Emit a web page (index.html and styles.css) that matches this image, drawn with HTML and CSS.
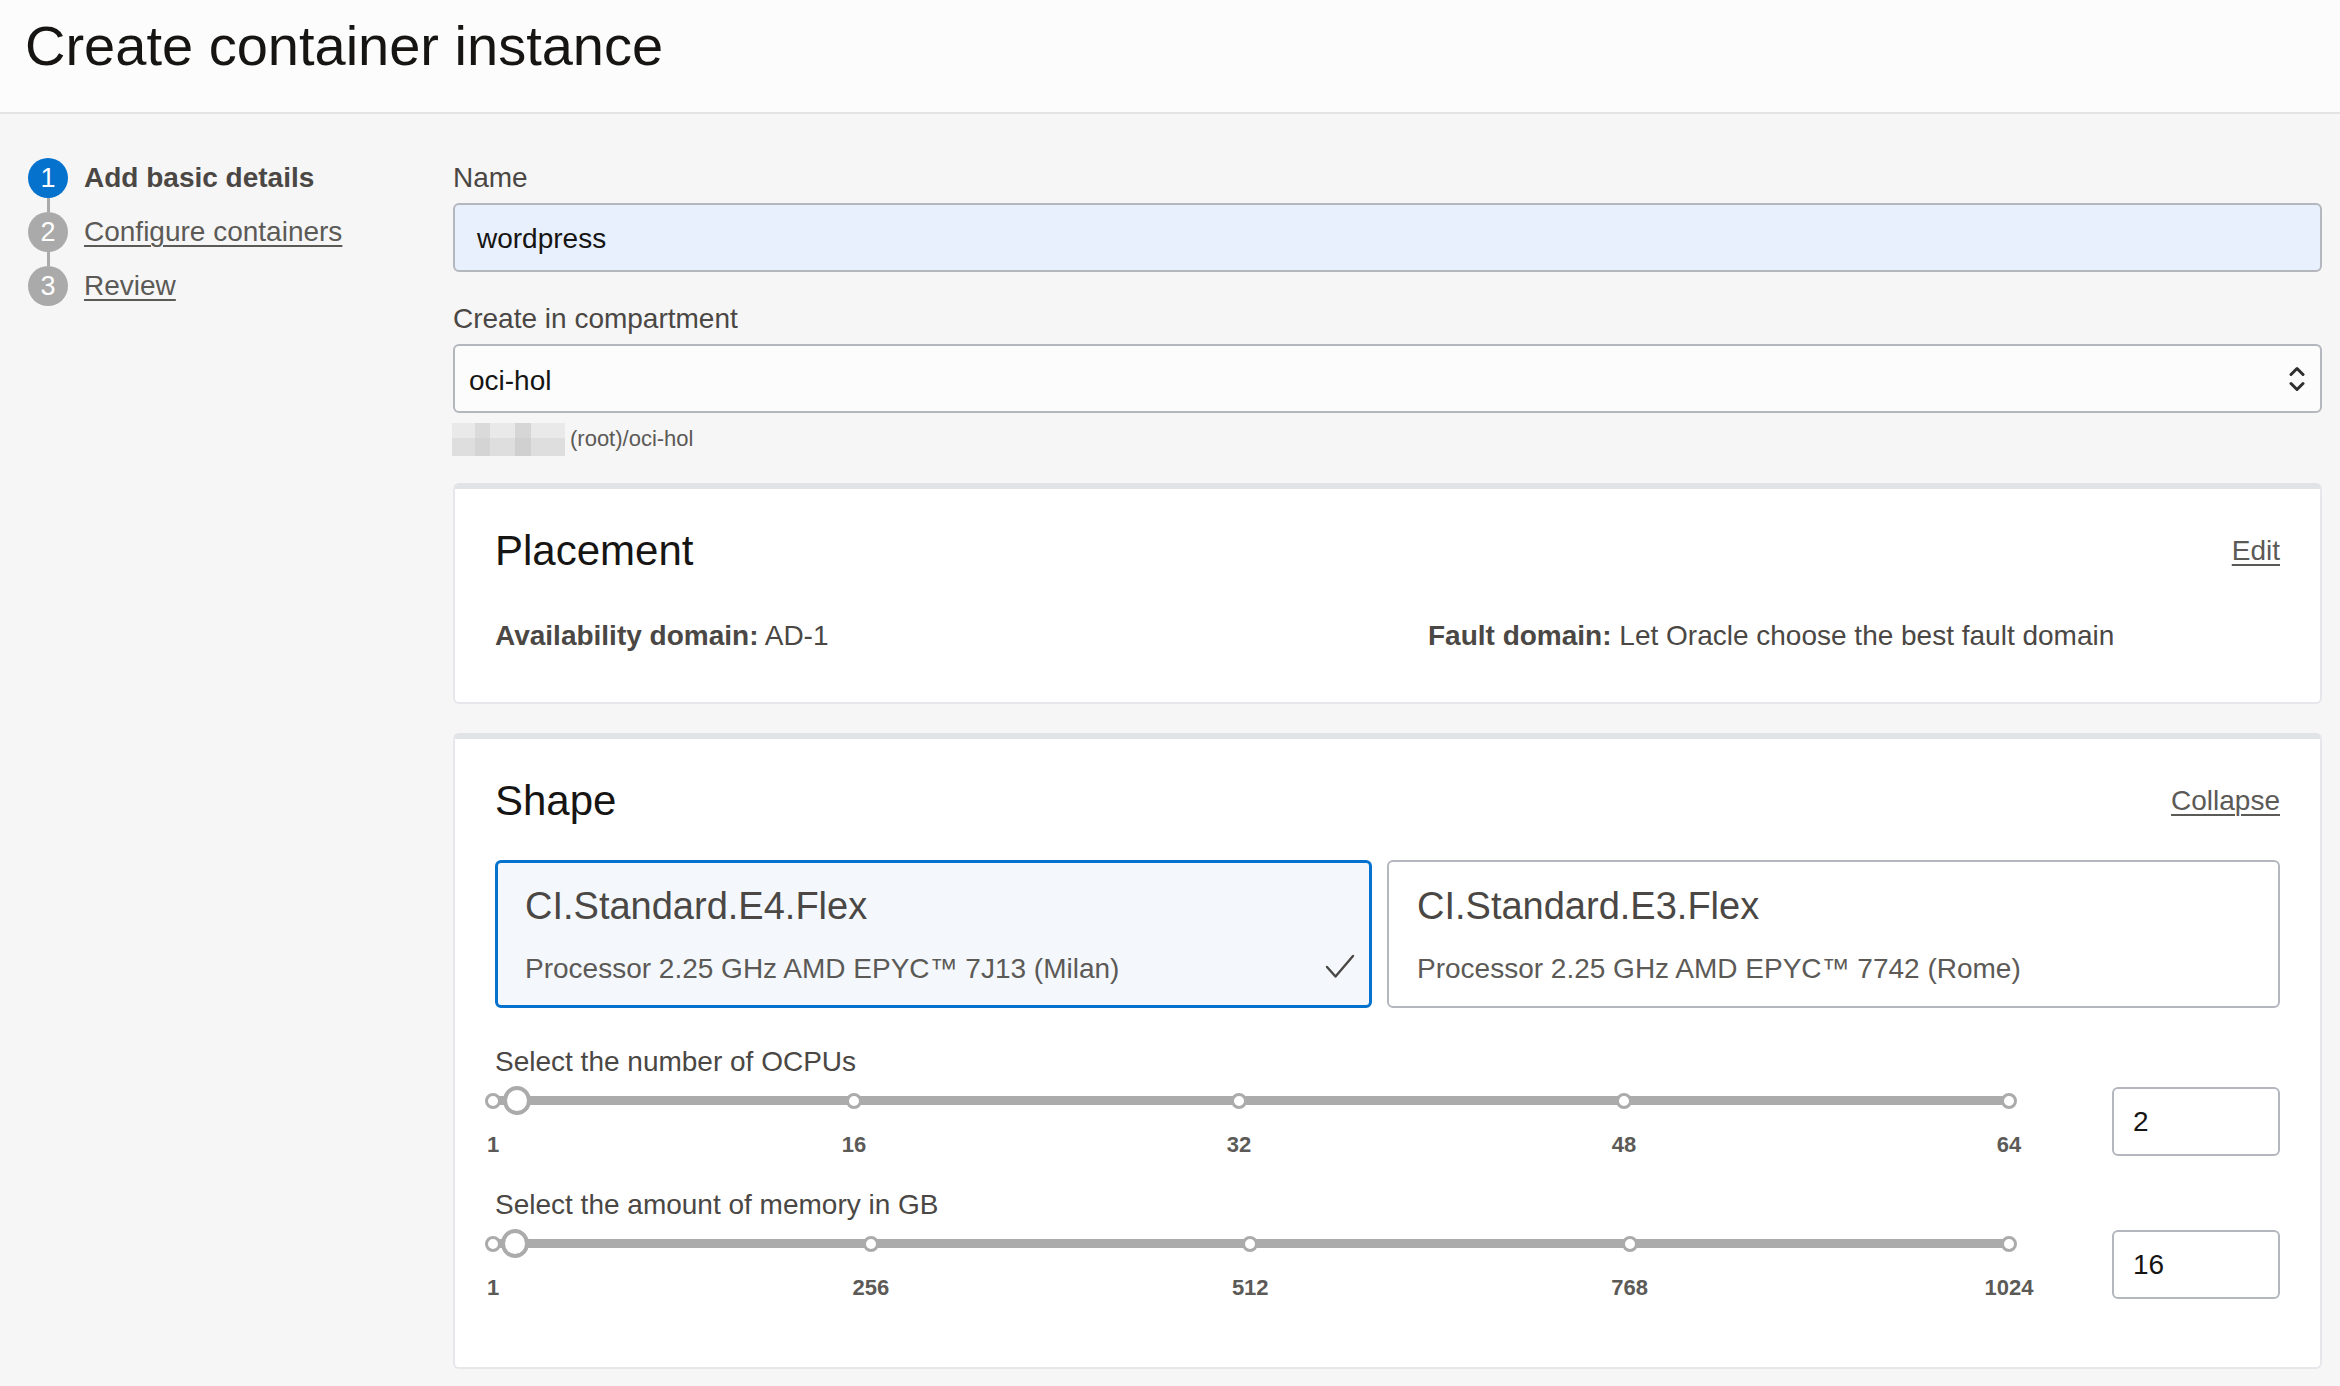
FILE: index.html
```html
<!DOCTYPE html>
<html lang="en">
<head>
<meta charset="utf-8">
<title>Create container instance</title>
<link rel="stylesheet" href="styles.css">
</head>
<body>
<header class="page-header">
  <h1 class="page-title">Create container instance</h1>
</header>
<div class="layout">
  <nav class="steps">
    <ol class="step-list">
      <li class="step step-current"><span class="step-num">1</span><span class="step-label">Add basic details</span></li>
      <li class="step"><span class="step-num">2</span><a class="step-label step-link" href="#">Configure containers</a></li>
      <li class="step"><span class="step-num">3</span><a class="step-label step-link" href="#">Review</a></li>
    </ol>
  </nav>
  <main class="content">
    <div class="field">
      <div class="field-label">Name</div>
      <div class="text-input autofilled"><span class="input-value">wordpress</span></div>
    </div>
    <div class="field field-spaced">
      <div class="field-label">Create in compartment</div>
      <div class="select-input">
        <span class="input-value">oci-hol</span>
        <svg class="select-icon" viewBox="0 0 16 28" width="16" height="28" aria-hidden="true">
          <path d="M2 9.5 L8 3.5 L14 9.5" fill="none" stroke="#2f2f2f" stroke-width="3" stroke-linecap="round" stroke-linejoin="round"/>
          <path d="M2 18.5 L8 24.5 L14 18.5" fill="none" stroke="#2f2f2f" stroke-width="3" stroke-linecap="round" stroke-linejoin="round"/>
        </svg>
      </div>
      <div class="path-line"><span class="redacted"></span><span class="path-text">(root)/oci-hol</span></div>
    </div>

    <section class="card card-placement">
      <div class="card-head">
        <h2 class="card-title">Placement</h2>
        <a class="card-link" href="#">Edit</a>
      </div>
      <div class="details">
        <div class="detail"><b>Availability domain:</b> AD-1</div>
        <div class="detail"><b>Fault domain:</b> Let Oracle choose the best fault domain</div>
      </div>
    </section>

    <section class="card card-shape">
      <div class="card-head">
        <h2 class="card-title">Shape</h2>
        <a class="card-link" href="#">Collapse</a>
      </div>
      <div class="shape-options">
        <div class="shape-option selected">
          <div class="shape-name">CI.Standard.E4.Flex</div>
          <div class="shape-desc-row">
            <span class="shape-desc">Processor 2.25 GHz AMD EPYC™ 7J13 (Milan)</span>
            <svg class="check" viewBox="0 0 30 26" width="30" height="26" aria-hidden="true">
              <path d="M2 13 L10.5 22.5 L28 2" fill="none" stroke="#4a4744" stroke-width="2.4" stroke-linecap="round" stroke-linejoin="round"/>
            </svg>
          </div>
        </div>
        <div class="shape-option">
          <div class="shape-name">CI.Standard.E3.Flex</div>
          <div class="shape-desc-row">
            <span class="shape-desc">Processor 2.25 GHz AMD EPYC™ 7742 (Rome)</span>
          </div>
        </div>
      </div>

      <div class="slider-field">
        <div class="field-label">Select the number of OCPUs</div>
        <div class="slider-row">
          <div class="slider">
            <div class="rail">
              <div class="track"></div>
              <span class="tick" style="left:0%"></span>
              <span class="tick" style="left:23.81%"></span>
              <span class="tick" style="left:49.21%"></span>
              <span class="tick" style="left:74.60%"></span>
              <span class="tick" style="left:100%"></span>
              <span class="thumb" style="left:1.59%"></span>
            </div>
            <div class="tick-labels">
              <span class="tick-label" style="left:0%">1</span>
              <span class="tick-label" style="left:23.81%">16</span>
              <span class="tick-label" style="left:49.21%">32</span>
              <span class="tick-label" style="left:74.60%">48</span>
              <span class="tick-label" style="left:100%">64</span>
            </div>
          </div>
          <div class="num-input">2</div>
        </div>
      </div>

      <div class="slider-field slider-field-2">
        <div class="field-label">Select the amount of memory in GB</div>
        <div class="slider-row">
          <div class="slider">
            <div class="rail">
              <div class="track"></div>
              <span class="tick" style="left:0%"></span>
              <span class="tick" style="left:24.93%"></span>
              <span class="tick" style="left:49.95%"></span>
              <span class="tick" style="left:74.98%"></span>
              <span class="tick" style="left:100%"></span>
              <span class="thumb" style="left:1.47%"></span>
            </div>
            <div class="tick-labels">
              <span class="tick-label" style="left:0%">1</span>
              <span class="tick-label" style="left:24.93%">256</span>
              <span class="tick-label" style="left:49.95%">512</span>
              <span class="tick-label" style="left:74.98%">768</span>
              <span class="tick-label" style="left:100%">1024</span>
            </div>
          </div>
          <div class="num-input">16</div>
        </div>
      </div>
    </section>
  </main>
</div>
</body>
</html>
```

FILE: styles.css
```css
* { box-sizing: border-box; }

html, body {
  margin: 0;
  padding: 0;
}

body {
  width: 2340px;
  height: 1386px;
  overflow: hidden;
  background: #f6f6f6;
  font-family: "Liberation Sans", Arial, Helvetica, sans-serif;
  color: #161513;
}

/* Header */
.page-header {
  height: 114px;
  background: #fcfcfc;
  border-bottom: 2px solid #e3e3e3;
  padding: 14px 25px 0;
}

.page-title {
  margin: 0;
  font-size: 56px;
  line-height: 64px;
  font-weight: 400;
  color: #161513;
}

/* Layout */
.layout {
  display: flex;
}

.steps {
  width: 453px;
  flex: none;
  padding: 37px 0 0 28px;
}

.step-list {
  list-style: none;
  margin: 0;
  padding: 0;
}

.step {
  position: relative;
  display: flex;
  align-items: center;
  height: 54px;
}

.step:not(:last-child)::after {
  content: "";
  position: absolute;
  left: 19px;
  top: 45px;
  width: 3px;
  height: 16px;
  background: #aaaaaa;
}

.step-num {
  width: 40px;
  height: 40px;
  border-radius: 50%;
  background: #aaaaaa;
  color: #ffffff;
  font-size: 27px;
  line-height: 40px;
  text-align: center;
  flex: none;
  position: relative;
  z-index: 1;
}

.step-current .step-num {
  background: #0572ce;
}

.step-label {
  margin-left: 16px;
  font-size: 28px;
  line-height: 34px;
  color: #5c5a57;
}

.step-current .step-label {
  font-weight: 700;
  color: #4a4744;
}

.step-link {
  text-decoration: underline;
  text-decoration-thickness: 2px;
  text-underline-offset: 4px;
}

/* Content */
.content {
  flex: 1;
  padding: 47px 18px 0 0;
}

.field-label {
  font-size: 28px;
  line-height: 34px;
  color: #4a4744;
}

.field-spaced {
  margin-top: 30px;
}

.text-input,
.select-input {
  margin-top: 8px;
  height: 69px;
  border: 2px solid #b4b7be;
  border-radius: 6px;
  font-size: 28px;
  line-height: 34px;
  color: #161513;
  display: flex;
  align-items: center;
}

.input-value {
  padding-top: 2px;
}

.text-input {
  padding-left: 22px;
}

.autofilled {
  background: #e8f0fe;
}

.select-input {
  background: #fcfcfc;
  padding: 0 15px 0 14px;
  justify-content: space-between;
}

.select-input .input-value {
  padding-top: 4px;
}

.select-icon {
  display: block;
}

.path-line {
  margin-top: 9px;
  height: 34px;
  display: flex;
  align-items: center;
}

.redacted {
  display: inline-block;
  width: 113px;
  height: 33px;
  margin-left: -1px;
  background:
    linear-gradient(90deg, rgba(255,255,255,0) 0 20%, rgba(200,200,200,0.45) 20% 34%, rgba(255,255,255,0) 34% 56%, rgba(190,190,190,0.45) 56% 70%, rgba(255,255,255,0) 70%),
    linear-gradient(180deg, #e9e9e9 0 45%, #dedede 45% 100%);
}

.path-text {
  margin-left: 5px;
  font-size: 22px;
  line-height: 26px;
  color: #5c5a57;
}

/* Cards */
.card {
  background: #ffffff;
  border: 2px solid #e6e7ea;
  border-top: 6px solid #e2e3e6;
  border-radius: 6px;
  padding: 37px 40px 0;
}

.card-placement {
  margin-top: 27px;
  padding-bottom: 49px;
}

.card-shape {
  margin-top: 29px;
  padding-bottom: 66px;
}

.card-head {
  display: flex;
  align-items: center;
  justify-content: space-between;
  height: 50px;
}

.card-title {
  margin: 0;
  font-size: 42px;
  line-height: 50px;
  font-weight: 400;
  color: #161513;
}

.card-link {
  font-size: 28px;
  line-height: 34px;
  color: #5c5a57;
  text-decoration: underline;
  text-decoration-thickness: 2px;
  text-underline-offset: 4px;
}

.details {
  margin-top: 43px;
  display: grid;
  grid-template-columns: 933px 1fr;
}

.detail {
  font-size: 28px;
  line-height: 34px;
  color: #4a4744;
}

.detail b {
  font-weight: 700;
}

/* Shape options */
.shape-options {
  margin-top: 34px;
  display: grid;
  grid-template-columns: 877px 1fr;
  column-gap: 15px;
}

.shape-option {
  height: 148px;
  border: 2px solid #b4b7be;
  border-radius: 6px;
  padding: 21px 17px 0 28px;
  background: #ffffff;
}

.shape-option.selected {
  border: 3px solid #0572ce;
  padding: 20px 16px 0 27px;
  background: #f4f8fc;
}

.shape-name {
  font-size: 38px;
  line-height: 46px;
  color: #4a4744;
}

.shape-desc-row {
  margin-top: 23px;
  display: flex;
  align-items: center;
  justify-content: space-between;
  height: 34px;
}

.shape-desc {
  font-size: 28px;
  line-height: 34px;
  color: #5c5a57;
}

.check {
  display: block;
  margin-top: -4px;
  margin-right: -2px;
}

/* Sliders */
.slider-field {
  margin-top: 37px;
}

.slider-field-2 {
  margin-top: 30px;
}

.slider-row {
  margin-top: 8px;
  display: flex;
  align-items: flex-start;
}

.slider {
  width: 1516px;
  margin-left: -2px;
}

.rail {
  position: relative;
  height: 28px;
}

.track {
  position: absolute;
  left: 0;
  right: 0;
  top: 9px;
  height: 9px;
  border-radius: 5px;
  background: #ababab;
}

.tick {
  position: absolute;
  top: 6px;
  width: 16px;
  height: 16px;
  margin-left: -8px;
  border-radius: 50%;
  background: #ffffff;
  border: 3px solid #ababab;
}

.thumb {
  position: absolute;
  top: -1px;
  width: 28px;
  height: 29px;
  margin-left: -14px;
  border-radius: 50%;
  background: #ffffff;
  border: 4px solid #ababab;
}

.tick-labels {
  position: relative;
  margin-top: 17px;
  height: 26px;
}

.tick-label {
  position: absolute;
  top: 0;
  transform: translateX(-50%);
  font-size: 22px;
  line-height: 26px;
  font-weight: 700;
  color: #5c5a57;
  white-space: nowrap;
}

.num-input {
  margin-left: auto;
  margin-top: 0;
  width: 168px;
  height: 69px;
  border: 2px solid #b4b7be;
  border-radius: 6px;
  background: #ffffff;
  padding-left: 19px;
  font-size: 28px;
  line-height: 65px;
  color: #161513;
}
```
